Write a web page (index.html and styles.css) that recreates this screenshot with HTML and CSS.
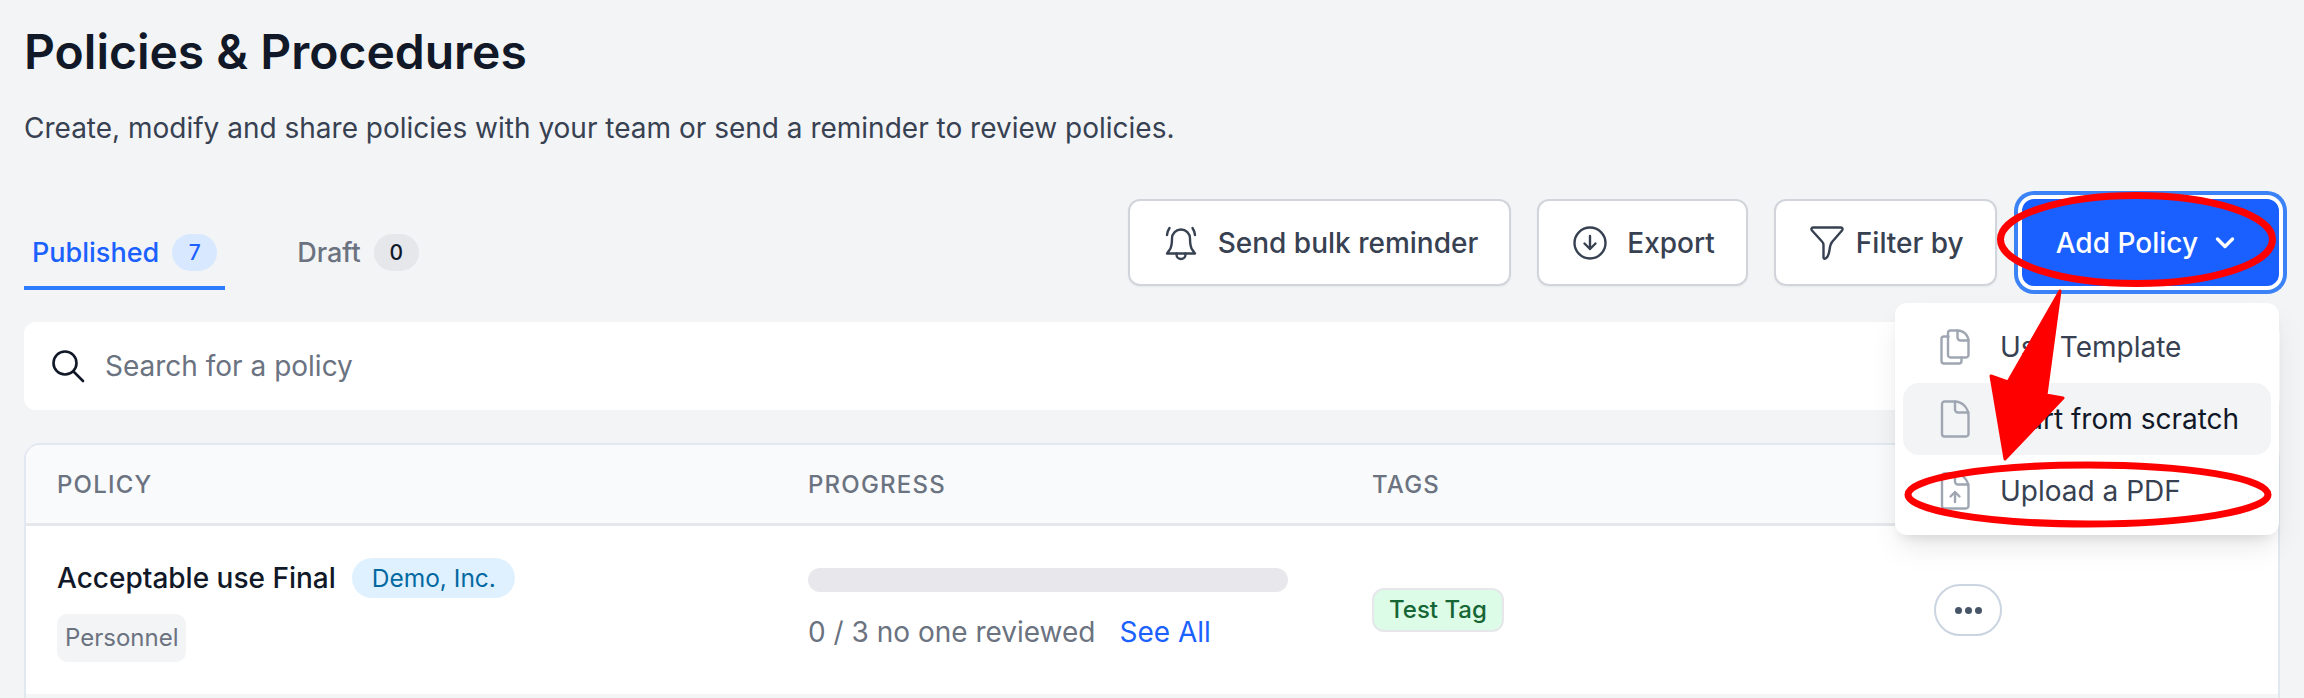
FILE: index.html
```html
<!DOCTYPE html>
<html lang="en">
<head>
    <meta charset="UTF-8">
    <meta name="viewport" content="width=device-width, initial-scale=1.0">
    <title>Policies &amp; Procedures</title>
    <link rel="stylesheet" href="styles.css">
</head>
<body>
    <div class="page">
        <h1>Policies &amp; Procedures</h1>
        <p class="subtitle">Create, modify and share policies with your team or send a reminder to review policies.</p>

        <div class="toolbar">
            <div class="tabs">
                <div class="tab active">Published <span class="count">7</span></div>
                <div class="tab">Draft <span class="count">0</span></div>
            </div>
            <div class="actions">
                <button class="btn">
                    <svg class="icon" viewBox="0 0 36 36" fill="none" stroke="currentColor" stroke-width="2.4" stroke-linecap="round" stroke-linejoin="round">
                        <path d="M9 13.500a9 9 0 0 1 18 0c0 6 .5 9 2.500 11.500 1 1.500 2 2.500 2.500 3.500H4c.5-1 1.500-2 2.500-3.500C8.500 22.500 9 19.500 9 13.500z"/>
                        <path d="M13.500 28.500v1a4.500 4.500 0 0 0 9 0v-1"/>
                        <path d="M6.500 3Q4.500 6 4 10M29.500 3q2 3 2.500 7"/>
                    </svg>
                    Send bulk reminder
                </button>
                <button class="btn">
                    <svg class="icon" viewBox="0 0 36 36" fill="none" stroke="currentColor" stroke-width="2.4" stroke-linecap="round" stroke-linejoin="round">
                        <circle cx="18" cy="18" r="15.500"/>
                        <path d="M18 11v13M12.500 18.500 18 24l5.500-5.500"/>
                    </svg>
                    Export
                </button>
                <button class="btn">
                    <svg class="icon icon-filter" viewBox="0 0 36 36" fill="none" stroke="currentColor" stroke-width="2.4" stroke-linecap="round" stroke-linejoin="round">
                        <path d="M4 2.500h28c1.500 0 2 1.500 1 3L23 17c-1.500 2-2 4-2.500 8-.5 4-1 7-4 8.500-1 .5-2 0-2-1V20c0-1.500-.5-2.500-1.500-3.500L3 5.500c-1-1.500-.5-3 1-3z"/>
                    </svg>
                    Filter by
                </button>
                <button class="btn primary">
                    Add Policy
                    <svg class="chevron" viewBox="0 0 20 14" fill="none" stroke="currentColor" stroke-width="3.400" stroke-linecap="round" stroke-linejoin="round">
                        <path d="M2.500 3 10 10.500 17.500 3"/>
                    </svg>
                </button>

                <div class="menu">
                    <div class="menu-item">
                        <svg class="menu-icon" viewBox="0 0 30 36" fill="none" stroke="currentColor" stroke-width="2.400" stroke-linecap="round" stroke-linejoin="round">
                            <path d="M8.500 7.500H4a2.500 2.500 0 0 0-2.500 2.500v22A2.500 2.500 0 0 0 4 34.500h15a2.500 2.500 0 0 0 2.500-2.500v-3.500"/>
                            <path d="M10.500 1.500h7c6.500 0 11 5 11 11v13.500a2.500 2.500 0 0 1-2.500 2.500H10.500A2.500 2.500 0 0 1 8 26V4a2.500 2.500 0 0 1 2.500-2.500z"/>
                            <path d="M17.500 1.500v7a3 3 0 0 0 3 3h8"/>
                        </svg>
                        Use Template
                    </div>
                    <div class="menu-item hover">
                        <svg class="menu-icon" viewBox="0 0 30 38" fill="none" stroke="currentColor" stroke-width="2.400" stroke-linecap="round" stroke-linejoin="round">
                            <path d="M4.500 1.500h10C22.500 1.500 28.500 8 28.500 16v18a2.500 2.500 0 0 1-2.500 2.500H4.500A2.500 2.500 0 0 1 2 34V4a2.500 2.500 0 0 1 2.500-2.500z"/>
                            <path d="M15 1.500v8a3 3 0 0 0 3 3h10.500"/>
                        </svg>
                        Start from scratch
                    </div>
                    <div class="menu-item">
                        <svg class="menu-icon" viewBox="0 0 30 38" fill="none" stroke="currentColor" stroke-width="2.400" stroke-linecap="round" stroke-linejoin="round">
                            <path d="M4.500 1.500h10C22.500 1.500 28.500 8 28.500 16v18a2.500 2.500 0 0 1-2.500 2.500H4.500A2.500 2.500 0 0 1 2 34V4a2.500 2.500 0 0 1 2.500-2.500z"/>
                            <path d="M15 1.500v8a3 3 0 0 0 3 3h10.500"/>
                            <path d="M15 30V20M10.500 24.500 15 20l4.500 4.500"/>
                        </svg>
                        Upload a PDF
                    </div>
                </div>
            </div>
        </div>

        <div class="search">
            <svg class="search-icon" viewBox="0 0 34 34" fill="none" stroke="#111827" stroke-width="2.600" stroke-linecap="round">
                <circle cx="14" cy="14" r="11.500"/>
                <path d="M22.500 22.500 32 32"/>
            </svg>
            <span>Search for a policy</span>
        </div>

        <div class="table">
            <div class="table-head">
                <div>POLICY</div>
                <div>PROGRESS</div>
                <div>TAGS</div>
                <div></div>
            </div>
            <div class="table-row">
                <div>
                    <div class="policy-name">Acceptable use Final <span class="org">Demo, Inc.</span></div>
                    <span class="category">Personnel</span>
                </div>
                <div>
                    <div class="progress"></div>
                    <div class="progress-text">0 / 3 no one reviewed <a class="see-all">See All</a></div>
                </div>
                <div><span class="tag">Test Tag</span></div>
                <div><button class="more"><i></i><i></i><i></i></button></div>
            </div>
        </div>
    </div>

    <!-- red marks drawn on top of the screenshot -->
    <svg class="marks" viewBox="0 0 2304 698" fill="none">
        <ellipse cx="2136.500" cy="239.500" rx="136" ry="44" stroke="#ff0000" stroke-width="7"/>
        <ellipse cx="2088" cy="494.500" rx="180" ry="29.500" stroke="#ff0000" stroke-width="7"/>
        <path d="M2060 291 2008 382 1991 376 2005 459 2063 398 2046 395z" fill="#ff0000" stroke="#ff0000" stroke-width="3" stroke-linejoin="round"/>
    </svg>
</body>
</html>
```

FILE: styles.css
```css
* {
    box-sizing: border-box;
}

html, body {
    height: 698px;
    margin: 0;
    overflow: hidden;
}

body {
    position: relative;
    background: #f3f4f6;
    font-family: Inter, "Liberation Sans", sans-serif;
    color: #111827;
}

.page {
    padding: 0 24px;
}

h1 {
    margin: 0;
    padding-top: 22px;
    font-size: 48px;
    line-height: 60px;
    font-weight: 600;
    color: #111827;
}

.subtitle {
    margin: 25px 0 0;
    font-size: 28px;
    line-height: 42px;
    color: #374151;
}

.toolbar {
    display: flex;
    justify-content: space-between;
    align-items: flex-end;
    margin-top: 50px;
}

.tabs {
    display: flex;
    gap: 64px;
}

.tab {
    display: flex;
    align-items: center;
    gap: 13px;
    height: 72px;
    padding: 0 8px;
    font-size: 27px;
    font-weight: 500;
    color: #6b7280;
    border-bottom: 4px solid transparent;
    margin-bottom: -4px;
}

.tab.active {
    color: #1a61ff;
    border-bottom-color: #2e7bff;
}

.count {
    display: flex;
    align-items: center;
    justify-content: center;
    width: 45px;
    height: 37px;
    border-radius: 19px;
    background: #e5e7eb;
    color: #111827;
    font-size: 21px;
}

.tab.active .count {
    background: #d7e8ff;
    color: #1a61ff;
}

.actions {
    position: relative;
    display: flex;
    gap: 26px;
    margin-right: 1px;
}

.btn {
    display: flex;
    align-items: center;
    gap: 19px;
    height: 87px;
    padding: 0 31px 0 33px;
    background: #fff;
    border: 2px solid #d1d5db;
    border-radius: 12px;
    box-shadow: 0 1px 2px rgba(0,0,0,0.05);
    font-family: inherit;
    font-size: 28px;
    font-weight: 500;
    color: #374151;
}

.btn.primary {
    gap: 17px;
    margin-left: -1px;
    padding: 0 42px 0 32px;
    background: #1a5fff;
    border-color: #1a5fff;
    color: #fff;
    box-shadow: 0 0 0 4px #fff, 0 0 0 8px #3b82f6;
}

.icon {
    width: 36px;
    height: 36px;
    color: #374151;
}

.icon-filter {
    margin-right: -8px;
}

.chevron {
    width: 20px;
    height: 14px;
}

.menu {
    position: absolute;
    top: 104px;
    right: 0;
    z-index: 2;
    width: 384px;
    padding: 8px;
    background: #fff;
    border-radius: 12px;
    box-shadow: 0 15px 30px -5px rgba(0,0,0,0.1), 0 8px 12px -6px rgba(0,0,0,0.1);
}

.menu-item {
    display: flex;
    align-items: center;
    gap: 30px;
    height: 72px;
    padding-left: 37px;
    border-radius: 16px;
    font-size: 28px;
    color: #374151;
}

.menu-item.hover {
    background: #f3f4f6;
    color: #111827;
}

.menu-icon {
    flex: none;
    width: 30px;
    height: 38px;
    color: #9fa6b2;
}

.search {
    display: flex;
    align-items: center;
    gap: 20px;
    height: 88px;
    margin-top: 36px;
    padding-left: 27px;
    background: #fff;
    border-radius: 12px;
    font-size: 28px;
    color: #6b7280;
}

.search-icon {
    width: 34px;
    height: 34px;
}

.table {
    height: 260px;
    margin-top: 33px;
    background: #fff;
    border: 2px solid #e2e8f0;
    border-bottom: 0;
    border-radius: 16px 16px 0 0;
    overflow: hidden;
}

.table-head, .table-row {
    display: grid;
    grid-template-columns: 751px 564px 562px 1fr;
    padding-left: 31px;
}

.table-head {
    align-items: center;
    height: 81px;
    background: #f9fafb;
    border-bottom: 3px solid #e5e7eb;
    font-size: 24px;
    font-weight: 500;
    letter-spacing: 1.200px;
    color: #6b7280;
}

.table-row {
    align-items: center;
    height: 172px;
    border-bottom: 4px solid #f3f4f6;
}

.policy-name {
    display: flex;
    align-items: center;
    gap: 16px;
    font-size: 28px;
    font-weight: 500;
    color: #111827;
}

.org {
    padding: 0 19px 0 20px;
    height: 40px;
    line-height: 40px;
    border-radius: 20px;
    background: #dff1ff;
    color: #0369a1;
    font-size: 24.500px;
    font-weight: 400;
}

.category {
    display: inline-block;
    height: 48px;
    line-height: 48px;
    margin-top: 16px;
    padding: 0 8px;
    border-radius: 10px;
    background: #f3f4f6;
    color: #6b7280;
    font-size: 24px;
}

.progress {
    width: 480px;
    height: 24px;
    border-radius: 12px;
    background: #e8e8ec;
}

.progress-text {
    display: flex;
    gap: 24px;
    margin-top: 20px;
    font-size: 28px;
    line-height: 40px;
    color: #6b7280;
}

.see-all {
    color: #1a61ff;
}

.tag {
    display: inline-block;
    height: 44px;
    line-height: 40px;
    padding: 0 15px;
    border: 2px solid #e5e7eb;
    border-radius: 12px;
    background: #dcfce7;
    color: #166534;
    font-size: 24px;
    font-weight: 500;
}

.more {
    display: flex;
    align-items: center;
    justify-content: center;
    gap: 3px;
    width: 68px;
    height: 52px;
    padding: 0;
    background: #fff;
    border: 2px solid #cbd5e1;
    border-radius: 26px;
}

.more i {
    width: 7px;
    height: 7px;
    border-radius: 50%;
    background: #475569;
}

.marks {
    position: absolute;
    top: 0;
    left: 0;
    width: 2304px;
    height: 698px;
    z-index: 5;
    pointer-events: none;
}
```
